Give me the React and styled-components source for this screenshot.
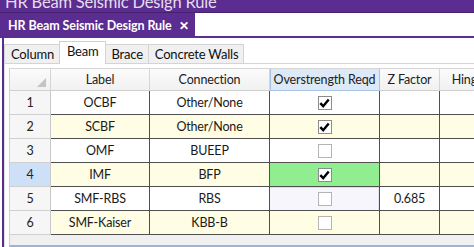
import React from "react";
import styled, { createGlobalStyle, css } from "styled-components";

const Global = createGlobalStyle`
  html, body { margin: 0; padding: 0; background: #ffffff; overflow: hidden; }
  body { font-family: Lato, "Noto Sans", sans-serif; width: 474px; height: 247px; }
`;

const PURPLE = "#5b2d90";

const TitleBar = styled.div`
  height: 12px;
  background: ${PURPLE};
  border-bottom: 1px solid #46206f;
  overflow: hidden;
  padding-left: 5px;
`;
const TitleText = styled.div`
  font-size: 16.5px;
  line-height: 16px;
  letter-spacing: -0.2px;
  margin-top: -6px;
  color: #e4dcef;
  white-space: nowrap;
`;

const DocTabs = styled.div`
  height: 23px;
  border-bottom: 2px solid ${PURPLE};
  display: flex;
  align-items: stretch;
`;
const DocTab = styled.div`
  background: ${PURPLE};
  color: #ffffff;
  font-weight: 700;
  font-size: 12.5px;
  letter-spacing: -0.1px;
  display: flex;
  align-items: center;
  gap: 7px;
  padding: 1px 6px 0 8px;
  white-space: nowrap;
`;
const Close = styled.span`
  font-size: 12px;
  font-weight: 700;
`;

const Frame = styled.div`
  margin-left: 2px;
  border-left: 2px solid ${PURPLE};
  height: 209px;
  overflow: hidden;
`;

const SubTabs = styled.div`
  display: flex;
  align-items: flex-end;
  height: 25px;
  position: relative;
  z-index: 1;
`;
const SubTab = styled.div`
  font-size: 13px;
  letter-spacing: -0.2px;
  color: #111;
  padding: 0 5px 0 6px;
  height: 19px;
  display: flex;
  align-items: center;
  background: #f0f0f0;
  border: 1px solid #d4d4d4;
  border-bottom: none;
  margin-right: -1px;
  box-sizing: border-box;
  ${(p) =>
    p.$active &&
    css`
      background: #ffffff;
      height: 23px;
      margin-bottom: -1px;
      padding: 0 6px 4px 7px;
      border-color: #d0d0d0;
    `}
`;

const Panel = styled.div`
  border-top: 1px solid #d4d4d4;
  border-left: 1px solid #e0e0e0;
  padding: 4px 0 0 4px;
`;

const Grid = styled.div`
  display: grid;
  grid-template-columns: 41px 99px 120px 110px 60px 56px;
  border-top: 1px solid #d6d6d6;
  border-left: 1px solid #d0d0d0;
  background: #f0f0f0;
  height: 176px;
  align-content: start;
  border-bottom: 2px solid #9fb3d1;
  width: 520px;
`;

const Cell = styled.div`
  box-sizing: border-box;
  display: flex;
  align-items: center;
  justify-content: center;
  font-size: 12.5px;
  letter-spacing: -0.15px;
  color: #1a1a1a;
  height: 24px;
  border-right: 1px solid #505050;
  border-bottom: 1px solid #505050;
  background: ${(p) => p.$bg || "#ffffff"};
  ${(p) =>
    p.$focus &&
    css`
      box-shadow: inset 0 1px 0 #dcdce8, inset -1px 0 0 #e4e4ee;
    `}
`;

const RowHead = styled(Cell)`
  background: ${(p) => (p.$sel ? "#cde0f7" : "#f6f6f6")};
  border-right: 1px solid #c8c8c8;
  border-bottom: 1px solid #d0d0d0;
  color: #222;
`;

const HeadCell = styled.div`
  box-sizing: border-box;
  height: 22px;
  display: flex;
  align-items: center;
  justify-content: center;
  font-size: 12.5px;
  letter-spacing: -0.15px;
  color: #222;
  white-space: nowrap;
  overflow: hidden;
  position: relative;
  background: ${(p) => (p.$hl ? "#dde9f7" : "linear-gradient(#fbfbfb, #f1f1f1)")};
  border-right: 1px solid ${(p) => (p.$hl ? "#a8c3e3" : "#d5d5d5")};
  border-bottom: 1px solid ${(p) => (p.$hl ? "#a8c3e3" : "#d0d0d0")};
  ${(p) => p.$hl && css`box-shadow: inset 1px 0 0 #a8c3e3;`}
`;

const Corner = styled.svg`
  position: absolute;
  right: 4px;
  bottom: 3px;
`;

const Box = styled.span`
  width: 14px;
  height: 14px;
  box-sizing: border-box;
  border: 1px solid ${(p) => (p.$checked ? "#8c8c8c" : "#b4b4b4")};
  background: #ffffff;
  display: flex;
  align-items: center;
  justify-content: center;
`;

const Check = ({ on }) => (
  <Box $checked={on}>
    {on && (
      <svg width="11" height="10" viewBox="0 0 11 10">
        <path d="M1.3 5.2 L4.2 8.2 L9.7 1.5" fill="none" stroke="#000" strokeWidth="2.4" />
      </svg>
    )}
  </Box>
);

const YEL = "#fffde4";
const rows = [
  { n: 1, label: "OCBF", conn: "Other/None", on: true, bg: "#ffffff" },
  { n: 2, label: "SCBF", conn: "Other/None", on: true, bg: YEL },
  { n: 3, label: "OMF", conn: "BUEEP", on: false, bg: "#ffffff" },
  { n: 4, label: "IMF", conn: "BFP", on: true, bg: YEL, sel: true, green: true },
  { n: 5, label: "SMF-RBS", conn: "RBS", on: false, bg: "#ffffff", z: "0.685", focus: true },
  { n: 6, label: "SMF-Kaiser", conn: "KBB-B", on: false, bg: YEL },
];

export default function App() {
  return (
    <>
      <Global />
      <TitleBar>
        <TitleText>HR Beam Seismic Design Rule</TitleText>
      </TitleBar>
      <DocTabs>
        <DocTab>
          HR Beam Seismic Design Rule <Close>✕</Close>
        </DocTab>
      </DocTabs>
      <Frame>
        <SubTabs>
          <SubTab>Column</SubTab>
          <SubTab $active>Beam</SubTab>
          <SubTab>Brace</SubTab>
          <SubTab>Concrete Walls</SubTab>
        </SubTabs>
        <Panel>
          <Grid>
            <HeadCell>
              <Corner width="9" height="9" viewBox="0 0 9 9">
                <path d="M9 0 L9 9 L0 9 Z" fill="#c4c4c4" />
              </Corner>
            </HeadCell>
            <HeadCell>Label</HeadCell>
            <HeadCell>Connection</HeadCell>
            <HeadCell $hl>Overstrength Reqd</HeadCell>
            <HeadCell>Z Factor</HeadCell>
            <HeadCell>Hinge</HeadCell>
            {rows.map((r) => (
              <React.Fragment key={r.n}>
                <RowHead $sel={r.sel}>{r.n}</RowHead>
                <Cell $bg={r.bg}>{r.label}</Cell>
                <Cell $bg={r.bg}>{r.conn}</Cell>
                <Cell $bg={r.green ? "#90ee90" : r.focus ? "#f6f6fc" : r.bg} $focus={r.focus}>
                  <Check on={r.on} />
                </Cell>
                <Cell $bg={r.bg}>{r.z || ""}</Cell>
                <Cell $bg={r.bg} />
              </React.Fragment>
            ))}
          </Grid>
        </Panel>
      </Frame>
    </>
  );
}
